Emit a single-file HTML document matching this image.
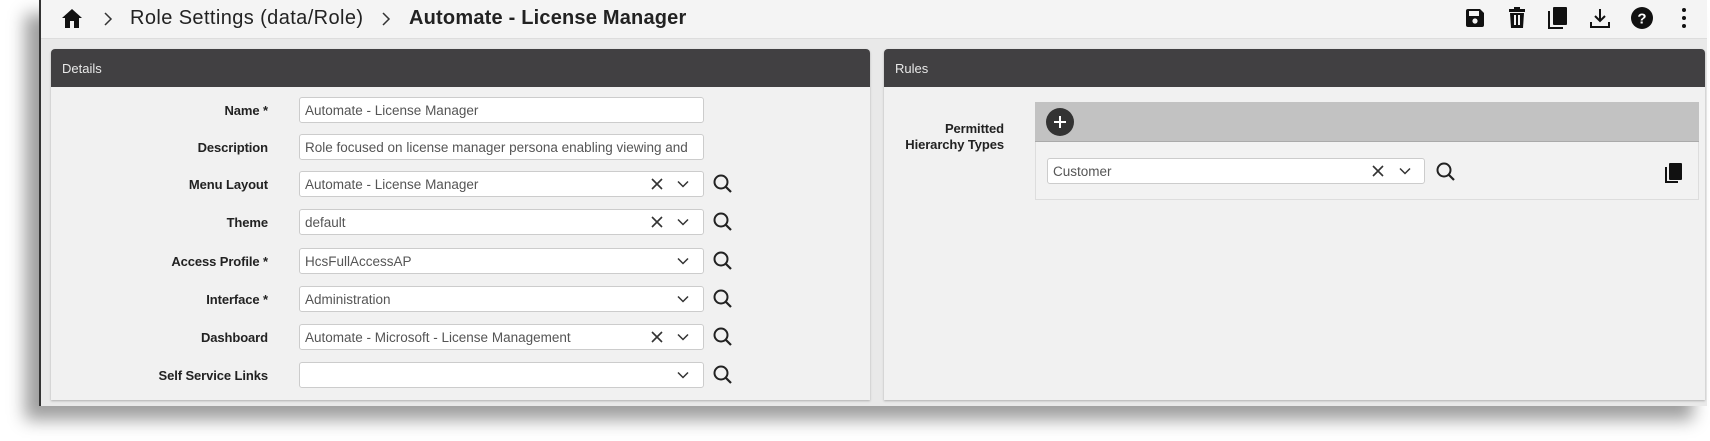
<!DOCTYPE html>
<html><head><meta charset="utf-8"><style>
*{box-sizing:border-box;margin:0;padding:0}
body{width:1710px;height:441px;background:#fff;position:relative;overflow:hidden;font-family:"Liberation Sans",Arial,sans-serif;color:#222}
.frame{position:absolute;left:39px;top:0;width:1668px;height:406px;background:#e9e9e9;border-left:2px solid #333;box-shadow:-14px 14px 16px rgba(0,0,0,.38)}
.top{position:absolute;left:0;top:0;width:100%;height:39px;background:#f4f4f4;border-bottom:1px solid #ddd}
.crumb{position:absolute;top:7px;font-size:20px;color:#222;white-space:nowrap;letter-spacing:0.4px}
.panel{position:absolute;top:49px;height:351px;background:#f1f1f1;border-radius:4px 4px 0 0;box-shadow:0 1px 2px rgba(0,0,0,.25)}
.ph{height:38px;background:#414042;color:#e8e8e8;font-size:13px;padding:12px 0 0 11px;border-radius:4px 4px 0 0}
.lbl{position:absolute;right:0;width:200px;text-align:right;font-size:13px;font-weight:bold;color:#222;letter-spacing:-0.1px}
.inp{position:absolute;height:26px;background:#fff;border:1px solid #ccc;border-radius:3px;font-size:13.5px;color:#555;padding:5px 5px;white-space:nowrap;overflow:hidden;letter-spacing:0}
.ic{position:absolute}
</style></head><body>
<div class="frame">
 <div class="top">
  <svg class="ic" style="left:20px;top:8px" width="22" height="21" viewBox="0 0 22 21"><path d="M11 1 L21 10 L18 10 L18 20 L13 20 L13 13 L9 13 L9 20 L4 20 L4 10 L1 10 Z" fill="#111"/></svg>
  <svg class="ic" style="left:62px;top:12px" width="10" height="14" viewBox="0 0 10 14"><path d="M2 1 L8 7 L2 13" stroke="#333" stroke-width="1.5" fill="none"/></svg>
  <div class="crumb" style="left:89px">Role Settings (data/Role)</div>
  <svg class="ic" style="left:340px;top:12px" width="10" height="14" viewBox="0 0 10 14"><path d="M2 1 L8 7 L2 13" stroke="#333" stroke-width="1.5" fill="none"/></svg>
  <div class="crumb" style="left:368px;font-weight:bold;letter-spacing:0.2px">Automate - License Manager</div>
  <svg class="ic" style="left:1423px;top:7px" width="22" height="22" viewBox="0 0 22 22"><path d="M2 4 Q2 2 4 2 H16 L20 6 V18 Q20 20 18 20 H4 Q2 20 2 18 Z" fill="#111"/><rect x="5" y="4" width="10" height="5" fill="#f4f4f4"/><circle cx="11" cy="14" r="2.6" fill="#f4f4f4"/></svg>
  <svg class="ic" style="left:1466px;top:7px" width="20" height="22" viewBox="0 0 20 22"><rect x="2" y="2" width="16" height="3" fill="#111"/><rect x="7" y="0" width="6" height="3" fill="#111"/><path d="M3 6 H17 L16 21 H4 Z" fill="#111"/><rect x="7" y="8" width="2" height="10" fill="#f4f4f4"/><rect x="11" y="8" width="2" height="10" fill="#f4f4f4"/></svg>
  <svg class="ic" style="left:1506px;top:6px" width="22" height="24" viewBox="0 0 22 24"><path d="M2 5 V22 H16" stroke="#111" stroke-width="2" fill="none"/><rect x="6" y="1" width="14" height="18" rx="1" fill="#111"/></svg>
  <svg class="ic" style="left:1548px;top:7px" width="22" height="22" viewBox="0 0 22 22"><path d="M11 2 V14 M6 9 L11 14 L16 9" stroke="#111" stroke-width="2" fill="none"/><path d="M2 15 V20 H20 V15" stroke="#111" stroke-width="2" fill="none"/></svg>
  <svg class="ic" style="left:1589px;top:6px" width="24" height="24" viewBox="0 0 24 24"><circle cx="12" cy="12" r="11" fill="#111"/><text x="12" y="17.5" text-anchor="middle" font-size="15" font-weight="bold" fill="#fff" font-family="Liberation Sans">?</text></svg>
  <svg class="ic" style="left:1640px;top:7px" width="6" height="22" viewBox="0 0 6 22"><circle cx="3" cy="3" r="2" fill="#111"/><circle cx="3" cy="11" r="2" fill="#111"/><circle cx="3" cy="19" r="2" fill="#111"/></svg>
 </div>
 <div class="panel" style="left:10px;width:819px"><div class="ph">Details</div></div>
 <div class="panel" style="left:843px;width:821px"><div class="ph">Rules</div></div>
</div>

<div style="position:absolute;left:0;top:0;width:1710px;height:441px">
 <div class="lbl" style="left:68px;top:103px">Name *</div>
 <div class="inp" style="left:299px;top:97px;width:405px">Automate - License Manager</div>
 <div class="lbl" style="left:68px;top:140px">Description</div>
 <div class="inp" style="left:299px;top:134px;width:405px">Role focused on license manager persona enabling viewing and</div>
 <div class="lbl" style="left:68px;top:177px">Menu Layout</div>
 <div class="inp" style="left:299px;top:171px;width:405px">Automate - License Manager</div>
 <div class="lbl" style="left:68px;top:215px">Theme</div>
 <div class="inp" style="left:299px;top:209px;width:405px">default</div>
 <div class="lbl" style="left:68px;top:254px">Access Profile *</div>
 <div class="inp" style="left:299px;top:248px;width:405px">HcsFullAccessAP</div>
 <div class="lbl" style="left:68px;top:292px">Interface *</div>
 <div class="inp" style="left:299px;top:286px;width:405px">Administration</div>
 <div class="lbl" style="left:68px;top:330px">Dashboard</div>
 <div class="inp" style="left:299px;top:324px;width:405px">Automate - Microsoft - License Management</div>
 <div class="lbl" style="left:68px;top:368px">Self Service Links</div>
 <div class="inp" style="left:299px;top:362px;width:405px"></div>

 <div class="lbl" style="left:804px;top:121px;line-height:16px">Permitted<br>Hierarchy Types</div>
 <div style="position:absolute;left:1035px;top:102px;width:664px;height:98px;background:#f2f2f2;border:1px solid #ddd"></div>
 <div style="position:absolute;left:1035px;top:102px;width:664px;height:40px;background:#c2c2c2;border-bottom:1px solid #aaa"></div>
 <svg class="ic" style="left:1046px;top:108px" width="28" height="28" viewBox="0 0 28 28"><circle cx="14" cy="14" r="14" fill="#333"/><path d="M14 8 V20 M8 14 H20" stroke="#fff" stroke-width="2"/></svg>
 <div class="inp" style="left:1047px;top:158px;width:378px">Customer</div>
 <svg class="ic" style="left:1664px;top:162px" width="20" height="22" viewBox="0 0 20 22"><path d="M2 5 V20 H14" stroke="#111" stroke-width="2" fill="none"/><rect x="5" y="1" width="13" height="17" rx="1" fill="#111"/></svg>
</div>

<svg style="position:absolute;left:0;top:0" width="1710" height="441">
 <defs>
  <g id="x"><path d="M-5 -5 L5 5 M5 -5 L-5 5" stroke="#333" stroke-width="1.6"/></g>
  <g id="v"><path d="M-5 -2.5 L0 2.5 L5 -2.5" stroke="#333" stroke-width="1.5" fill="none"/></g>
  <g id="s"><circle cx="-2" cy="-2" r="6.5" stroke="#222" stroke-width="2" fill="none"/><path d="M2.5 2.5 L8 8" stroke="#222" stroke-width="2.2"/></g>
 </defs>
 <use href="#x" x="657" y="184"/><use href="#v" x="683" y="184"/><use href="#s" x="723" y="184"/>
 <use href="#x" x="657" y="222"/><use href="#v" x="683" y="222"/><use href="#s" x="723" y="222"/>
 <use href="#v" x="683" y="261"/><use href="#s" x="723" y="261"/>
 <use href="#v" x="683" y="299"/><use href="#s" x="723" y="299"/>
 <use href="#x" x="657" y="337"/><use href="#v" x="683" y="337"/><use href="#s" x="723" y="337"/>
 <use href="#v" x="683" y="375"/><use href="#s" x="723" y="375"/>
 <use href="#x" x="1378" y="171"/><use href="#v" x="1405" y="171"/><use href="#s" x="1446" y="172"/>
</svg>
</body></html>
